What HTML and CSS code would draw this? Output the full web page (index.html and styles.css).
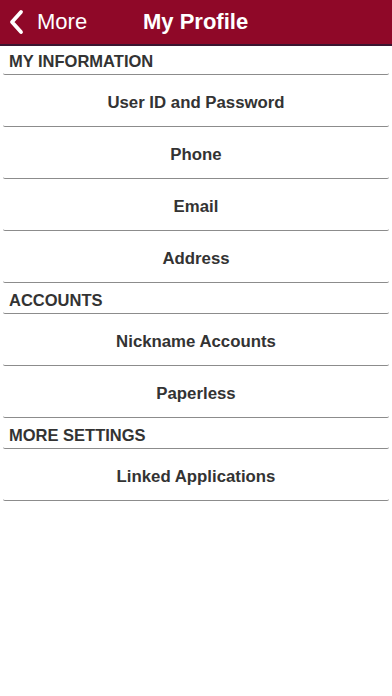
FILE: index.html
```html
<!DOCTYPE html>
<html lang="en">
<head>
  <meta charset="UTF-8" />
  <meta name="viewport" content="width=device-width, initial-scale=1.0" />
  <title>My Profile</title>
  <link rel="stylesheet" href="styles.css">
</head>
<body>
  <div class="nav-bar">
    <div class="back">
      <svg class="chevron" width="16" height="26" viewBox="0 0 16 26">
        <path d="M13 3 L4 13 L13 23" fill="none" stroke="#fff" stroke-width="3.8" stroke-linecap="round" stroke-linejoin="round"/>
      </svg>
      <span>More</span>
    </div>
    <div class="title">My Profile</div>
  </div>

  <div class="section first">MY INFORMATION</div>
  <div class="row">User ID and Password</div>
  <div class="row">Phone</div>
  <div class="row">Email</div>
  <div class="row">Address</div>

  <div class="section">ACCOUNTS</div>
  <div class="row">Nickname Accounts</div>
  <div class="row">Paperless</div>

  <div class="section">MORE SETTINGS</div>
  <div class="row">Linked Applications</div>
</body>
</html>
```

FILE: styles.css
```css
body {
  margin: 0;
  padding: 0;
  background: #fff;
  font-family: "Liberation Sans", Arial, sans-serif;
  color: #333;
}
.nav-bar {
  display: flex;
  align-items: center;
  height: 44px;
  background: #8f0828;
  border-bottom: 2px solid #3b1530;
  color: #fff;
}
.back {
  display: flex;
  align-items: center;
  width: 143px;
  padding-left: 8px;
  box-sizing: border-box;
  font-size: 22px;
}
.chevron {
  margin-right: 13px;
}
.title {
  font-size: 22px;
  font-weight: bold;
}
.section {
  height: 31px;
  padding: 5px 0 0 6px;
  box-sizing: border-box;
  margin: 0 3px;
  border-bottom: 1px solid #8c8c8c;
  border-radius: 0 0 2px 2px;
  font-size: 16.5px;
  font-weight: bold;
  line-height: 24px;
}
.section.first {
  height: 29px;
  padding-top: 3px;
}
.row {
  display: flex;
  align-items: center;
  justify-content: center;
  height: 52px;
  padding-top: 5px;
  box-sizing: border-box;
  margin: 0 3px;
  border-bottom: 1px solid #8c8c8c;
  border-radius: 0 0 2px 2px;
  font-size: 16.8px;
  font-weight: bold;
}
```
